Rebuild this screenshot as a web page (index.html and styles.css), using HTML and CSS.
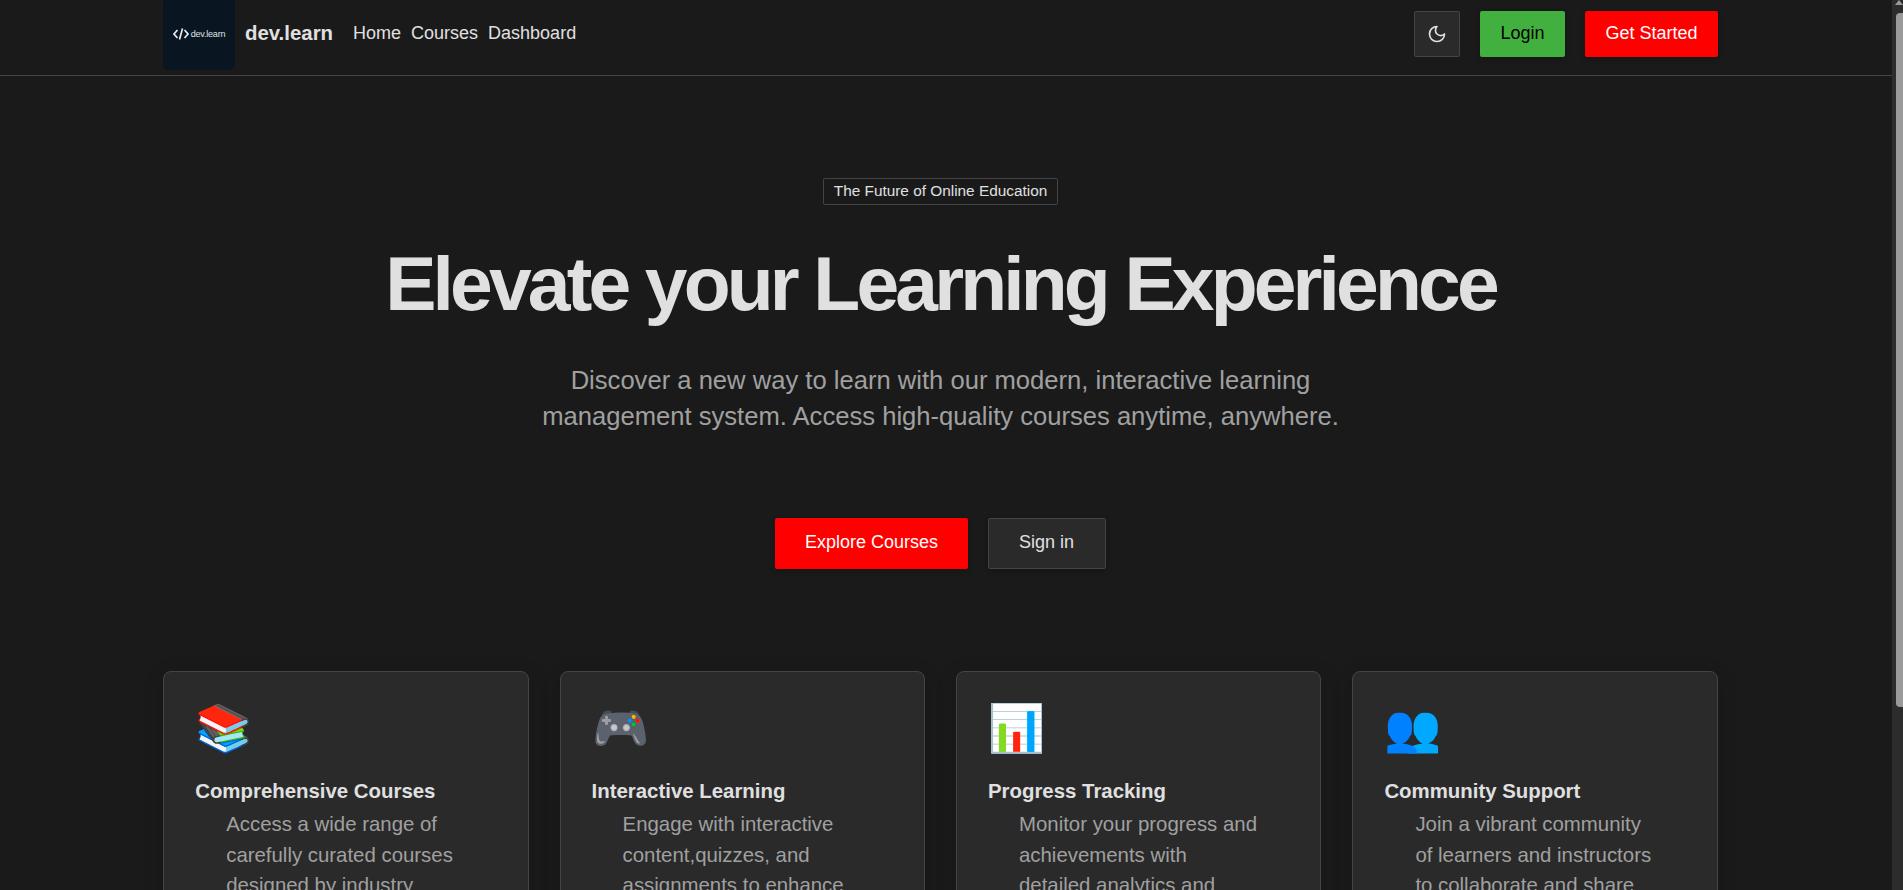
FILE: index.html
```html
<!DOCTYPE html>
<html>
<head>
    <title>dev.learn</title>
    <link rel="stylesheet" href="styles.css">
</head>
<body>
    <header class="site-header">
        <div class="wrap header-inner">
            <a class="logo" href="#">
                <svg class="logo-mark" viewBox="0 0 16 12" width="16" height="12" fill="none" stroke="#e6e9eb" stroke-width="1.7">
                    <path d="M4.5 2 1 6l3.500 4"/>
                    <path d="M9.500 .5 6.500 11.500"/>
                    <path d="M11.500 2 15 6l-3.500 4"/>
                </svg>
                <span class="logo-text">dev.learn</span>
            </a>
            <a class="brand" href="#">dev.learn</a>
            <nav class="main-nav">
                <a href="#">Home</a>
                <a href="#">Courses</a>
                <a href="#">Dashboard</a>
            </nav>
            <div class="header-actions">
                <button class="theme-toggle">
                    <svg viewBox="0 0 24 24" width="20" height="20" fill="none" stroke="#e0e0e0" stroke-width="2" stroke-linecap="round" stroke-linejoin="round">
                        <path d="M12 3a6 6 0 0 0 9 9 9 9 0 1 1-9-9Z"/>
                    </svg>
                </button>
                <button class="btn btn-login">Login</button>
                <button class="btn btn-red">Get Started</button>
            </div>
        </div>
    </header>

    <main class="wrap">
        <section class="hero">
            <span class="badge">The Future of Online Education</span>
            <h1>Elevate your Learning Experience</h1>
            <p class="hero-text">Discover a new way to learn with our modern, interactive learning management system. Access high-quality courses anytime, anywhere.</p>
            <div class="hero-actions">
                <button class="btn btn-large btn-red">Explore Courses</button>
                <button class="btn btn-large btn-dark">Sign in</button>
            </div>
        </section>

        <section class="features">
            <div class="card">
                <div class="card-icon">📚</div>
                <h3>Comprehensive Courses</h3>
                <p>Access a wide range of carefully curated courses designed by industry experts.</p>
            </div>
            <div class="card">
                <div class="card-icon">🎮</div>
                <h3>Interactive Learning</h3>
                <p>Engage with interactive content,quizzes, and assignments to enhance your learning.</p>
            </div>
            <div class="card">
                <div class="card-icon">📊</div>
                <h3>Progress Tracking</h3>
                <p>Monitor your progress and achievements with detailed analytics and insights.</p>
            </div>
            <div class="card">
                <div class="card-icon">👥</div>
                <h3>Community Support</h3>
                <p>Join a vibrant community of learners and instructors to collaborate and share knowledge.</p>
            </div>
        </section>
    </main>

    <div class="scrollbar">
        <span class="scrollbar-arrow"></span>
        <span class="scrollbar-thumb"></span>
    </div>
</body>
</html>
```

FILE: styles.css
```css
* {
    box-sizing: border-box;
}

body {
    margin: 0;
    font-family: "Liberation Sans", Arial, sans-serif;
    background-color: #1a1a1a;
    color: #e0e0e0;
}

a {
    color: inherit;
    text-decoration: none;
}

button {
    font-family: inherit;
    cursor: pointer;
}

.wrap {
    width: 1555px;
    margin-left: 163px;
}

/* header */
.site-header {
    padding-bottom: 7px;
    border-bottom: 1px solid #444;
}

.header-inner {
    display: flex;
    align-items: center;
    height: 68px;
}

.logo {
    display: flex;
    align-items: center;
    justify-content: center;
    gap: 2px;
    width: 72px;
    height: 72px;
    flex-shrink: 0;
    background-color: #0a1522;
    border-radius: 5px;
    color: #dfe3e6;
}

.logo-text {
    font-size: 9px;
    letter-spacing: -0.2px;
}

.brand {
    margin-left: 10px;
    padding-bottom: 2px;
    font-size: 20.4px;
    font-weight: bold;
}

.main-nav {
    display: flex;
    gap: 10px;
    margin-left: 20px;
    padding-bottom: 2px;
    font-size: 18px;
}

.header-actions {
    display: flex;
    gap: 20px;
    margin-left: auto;
}

.theme-toggle {
    display: flex;
    align-items: center;
    justify-content: center;
    width: 46px;
    height: 46px;
    padding: 0;
    background-color: #2a2a2a;
    border: 1px solid #444;
    border-radius: 2px;
}

.btn {
    height: 46px;
    padding: 0 20.5px 2px;
    border: none;
    border-radius: 2px;
    font-size: 18px;
    box-shadow: 0 2px 6px rgba(0, 0, 0, 0.2);
}

.btn-login {
    background-color: #41b03f;
    color: #000;
}

.btn-red {
    background-color: #ff0000;
    color: #fff;
}

.btn-dark {
    background-color: #2a2a2a;
    border: 1px solid #444;
    color: #e0e0e0;
}

.btn-large {
    height: 51px;
    padding: 0 29.5px 2px;
}

.btn-large.btn-dark {
    padding: 0 30.5px 2px;
}

/* hero */
.hero {
    display: flex;
    flex-direction: column;
    align-items: center;
    padding-top: 102px;
}

.badge {
    padding: 3px 10px 5px;
    border: 1px solid #444;
    border-radius: 2px;
    font-size: 15.36px;
    line-height: 17px;
}

.hero h1 {
    margin: 35px 0 0;
    font-size: 76.8px;
    line-height: 86px;
    font-weight: bold;
    letter-spacing: -0.05em;
}

.hero-text {
    width: 800px;
    margin: 36px 0 0;
    color: #a0a0a0;
    font-size: 25.6px;
    line-height: 36px;
    text-align: center;
}

.hero-actions {
    display: flex;
    gap: 20px;
    margin-top: 84px;
}

/* feature cards */
.features {
    display: grid;
    grid-template-columns: repeat(4, 1fr);
    gap: 31px;
    width: 1554.6px;
    margin: 102px 0 0 0.2px;
    padding-bottom: 60px;
}

.card {
    padding: 31px 31px 32px;
    background-color: #2a2a2a;
    border: 1px solid #444;
    border-radius: 8px;
    box-shadow: 0 4px 20px rgba(0, 0, 0, 0.15);
}

.card-icon {
    font-size: 46px;
    line-height: 50px;
    filter: saturate(1.8);
}

.card h3 {
    margin: 26px 0 0;
    font-size: 20.4px;
    line-height: 24px;
}

.card p {
    margin: 6px 30px 0 31px;
    color: #a0a0a0;
    font-size: 20.4px;
    line-height: 30.7px;
}

/* the browser's scrollbar as it stands in the picture */
.scrollbar {
    position: fixed;
    top: 0;
    right: 0;
    bottom: 0;
    width: 11px;
    background-color: #2c2c2c;
}

.scrollbar-arrow {
    position: absolute;
    top: 0;
    right: 0;
    width: 0;
    height: 0;
    border-left: 4px solid transparent;
    border-right: 4px solid transparent;
    border-bottom: 5px solid #9a9a9a;
}

.scrollbar-thumb {
    position: absolute;
    top: 13px;
    right: 0;
    width: 7px;
    height: 694px;
    background-color: #9a9a9a;
    border-radius: 4px 0 0 4px;
}
```
